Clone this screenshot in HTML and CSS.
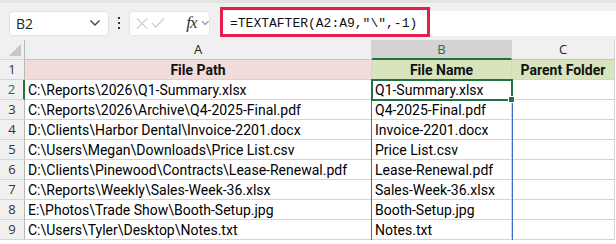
FILE: index.html
```html
<!DOCTYPE html>
<html lang="en">
<head>
    <meta charset="UTF-8">
    <title>TEXTAFTER file name</title>
    <link rel="stylesheet" href="styles.css">
</head>
<body>
    <div class="formula-bar">
        <div class="name-box">
            <span>B2</span>
            <svg class="chev" width="12" height="8" viewBox="0 0 12 8"><path d="M1.5 1.5 L6 6 L10.5 1.5" fill="none" stroke="#444" stroke-width="1.4"/></svg>
        </div>
        <div class="dots"><i></i><i></i><i></i></div>
        <div class="fn-box">
            <svg width="13" height="13" viewBox="0 0 13 13"><path d="M1 1 L12 12 M12 1 L1 12" stroke="#c8c8c8" stroke-width="1.2"/></svg>
            <svg width="15" height="12" viewBox="0 0 15 12"><path d="M1 6 L5 10.5 L14 1" fill="none" stroke="#c8c8c8" stroke-width="1.2"/></svg>
            <span class="fx">fx</span>
            <svg width="9" height="6" viewBox="0 0 9 6"><path d="M1 1 L4.5 4.5 L8 1" fill="none" stroke="#888" stroke-width="1.1"/></svg>
        </div>
        <div class="formula-box">
            <span class="formula">=TEXTAFTER(A2:A9,"\",-1)</span>
        </div>
    </div>

    <div class="sheet">
        <div class="grid">
            <div class="corner"><span class="tri"></span></div>
            <div class="col-head">A</div>
            <div class="col-head active">B</div>
            <div class="col-head">C</div>

            <div class="row-head">1</div>
            <div class="cell title pink">File Path</div>
            <div class="cell title green">File Name</div>
            <div class="cell title green">Parent Folder</div>

            <div class="row-head active">2</div>
            <div class="cell">C:\Reports\2026\Q1-Summary.xlsx</div>
            <div class="cell">Q1-Summary.xlsx</div>
            <div class="cell"></div>

            <div class="row-head">3</div>
            <div class="cell">C:\Reports\2026\Archive\Q4-2025-Final.pdf</div>
            <div class="cell">Q4-2025-Final.pdf</div>
            <div class="cell"></div>

            <div class="row-head">4</div>
            <div class="cell">D:\Clients\Harbor Dental\Invoice-2201.docx</div>
            <div class="cell">Invoice-2201.docx</div>
            <div class="cell"></div>

            <div class="row-head">5</div>
            <div class="cell">C:\Users\Megan\Downloads\Price List.csv</div>
            <div class="cell">Price List.csv</div>
            <div class="cell"></div>

            <div class="row-head">6</div>
            <div class="cell">D:\Clients\Pinewood\Contracts\Lease-Renewal.pdf</div>
            <div class="cell">Lease-Renewal.pdf</div>
            <div class="cell"></div>

            <div class="row-head">7</div>
            <div class="cell">C:\Reports\Weekly\Sales-Week-36.xlsx</div>
            <div class="cell">Sales-Week-36.xlsx</div>
            <div class="cell"></div>

            <div class="row-head">8</div>
            <div class="cell">E:\Photos\Trade Show\Booth-Setup.jpg</div>
            <div class="cell">Booth-Setup.jpg</div>
            <div class="cell"></div>

            <div class="row-head">9</div>
            <div class="cell">C:\Users\Tyler\Desktop\Notes.txt</div>
            <div class="cell">Notes.txt</div>
            <div class="cell"></div>
        </div>
        <!-- spill range + active cell outlines -->
        <div class="spill"></div>
        <div class="selection"><span class="handle"></span></div>
    </div>
</body>
</html>
```

FILE: styles.css
```css
body {
    margin: 0;
    padding: 0;
    background: #ffffff;
    font-family: Roboto, 'Liberation Sans', sans-serif;
    overflow: hidden;
}

/* formula bar */
.formula-bar {
    display: flex;
    align-items: center;
    height: 40px;
    padding-top: 3px;
    background: #f0f0f0;
    border-top: 3px solid #e4e4e4;
    box-sizing: border-box;
}
.name-box {
    display: flex;
    align-items: center;
    justify-content: space-between;
    width: 100px;
    height: 25px;
    margin-left: 9px;
    padding: 0 7px 0 6px;
    box-sizing: border-box;
    background: #fff;
    border: 1px solid #e2e2e2;
    border-radius: 4px;
    font-family: 'Open Sans', sans-serif;
    font-size: 14px;
    color: #222;
}
.dots {
    display: flex;
    flex-direction: column;
    gap: 3px;
    margin: 0 9px 0 9px;
}
.dots i {
    display: block;
    width: 2px;
    height: 2px;
    background: #333;
}
.fn-box {
    display: flex;
    align-items: center;
    width: 81px;
    height: 25px;
    padding-left: 6px;
    box-sizing: border-box;
    background: #fff;
    border: 1px solid #e6e6e6;
    border-radius: 4px;
    gap: 3px;
}
.fn-box .fx {
    font-family: 'Liberation Serif', serif;
    font-style: italic;
    font-size: 17px;
    color: #333;
    margin-left: 18px;
    margin-right: 1px;
    letter-spacing: -1px;
}
.formula-box {
    flex: 1;
    height: 25px;
    margin-left: 10px;
    background: #fff;
    display: flex;
    align-items: center;
    position: relative;
}
.formula-box::before {
    content: "";
    position: absolute;
    left: 0;
    top: -4px;
    width: 210px;
    height: 30px;
    border: 3px solid #e41e4d;
    box-sizing: border-box;
}
.formula {
    font-family: 'Liberation Mono', monospace;
    font-size: 13px;
    color: #111;
    margin-left: 10px;
}

/* sheet */
.sheet {
    position: relative;
}
.grid {
    display: grid;
    grid-template-columns: 25px 347px 140px 103px;
    grid-auto-rows: 20px;
    font-size: 14px;
}
.grid > div {
    box-sizing: border-box;
    border-right: 1px solid #d4d4d4;
    border-bottom: 1px solid #d4d4d4;
    white-space: nowrap;
}
.corner {
    background: #f0f0f0;
    position: relative;
    border-right: 1px solid #b8b8b8 !important;
}
.tri {
    position: absolute;
    right: 3px;
    bottom: 3px;
    width: 0;
    height: 0;
    border-left: 12px solid transparent;
    border-bottom: 12px solid #c6c6c6;
}
.col-head {
    background: #f0f0f0;
    text-align: center;
    font-family: 'Open Sans', sans-serif;
    font-size: 13px;
    line-height: 19px;
    color: #222;
    border-bottom-color: #c4c4c4 !important;
}
.col-head.active {
    background: #d3d3d3;
    color: #217346;
    border-bottom: 2px solid #217346 !important;
}
.row-head {
    background: #f0f0f0;
    text-align: center;
    font-family: 'Open Sans', sans-serif;
    font-size: 13px;
    line-height: 19px;
    color: #333;
    border-right: 1px solid #b8b8b8 !important;
}
.row-head.active {
    color: #217346;
    border-right: 2px solid #217346 !important;
}
.cell {
    padding-left: 3px;
    line-height: 20px;
    color: #000;
}
.cell.title {
    text-align: center;
    font-weight: bold;
    padding-left: 0;
    color: #111;
}
.pink {
    background: #f2dcdb;
}
.green {
    background: #d8e4bc;
}

.spill {
    position: absolute;
    left: 371px;
    top: 40px;
    width: 142px;
    height: 161px;
    border: 1px solid #3a6fc8;
    box-sizing: border-box;
}
.selection {
    position: absolute;
    left: 371px;
    top: 39px;
    width: 142px;
    height: 22px;
    border: 2px solid #217346;
    box-sizing: border-box;
}
.handle {
    position: absolute;
    right: -4px;
    bottom: -4px;
    width: 5px;
    height: 5px;
    background: #217346;
    border: 1px solid #fff;
}
```
